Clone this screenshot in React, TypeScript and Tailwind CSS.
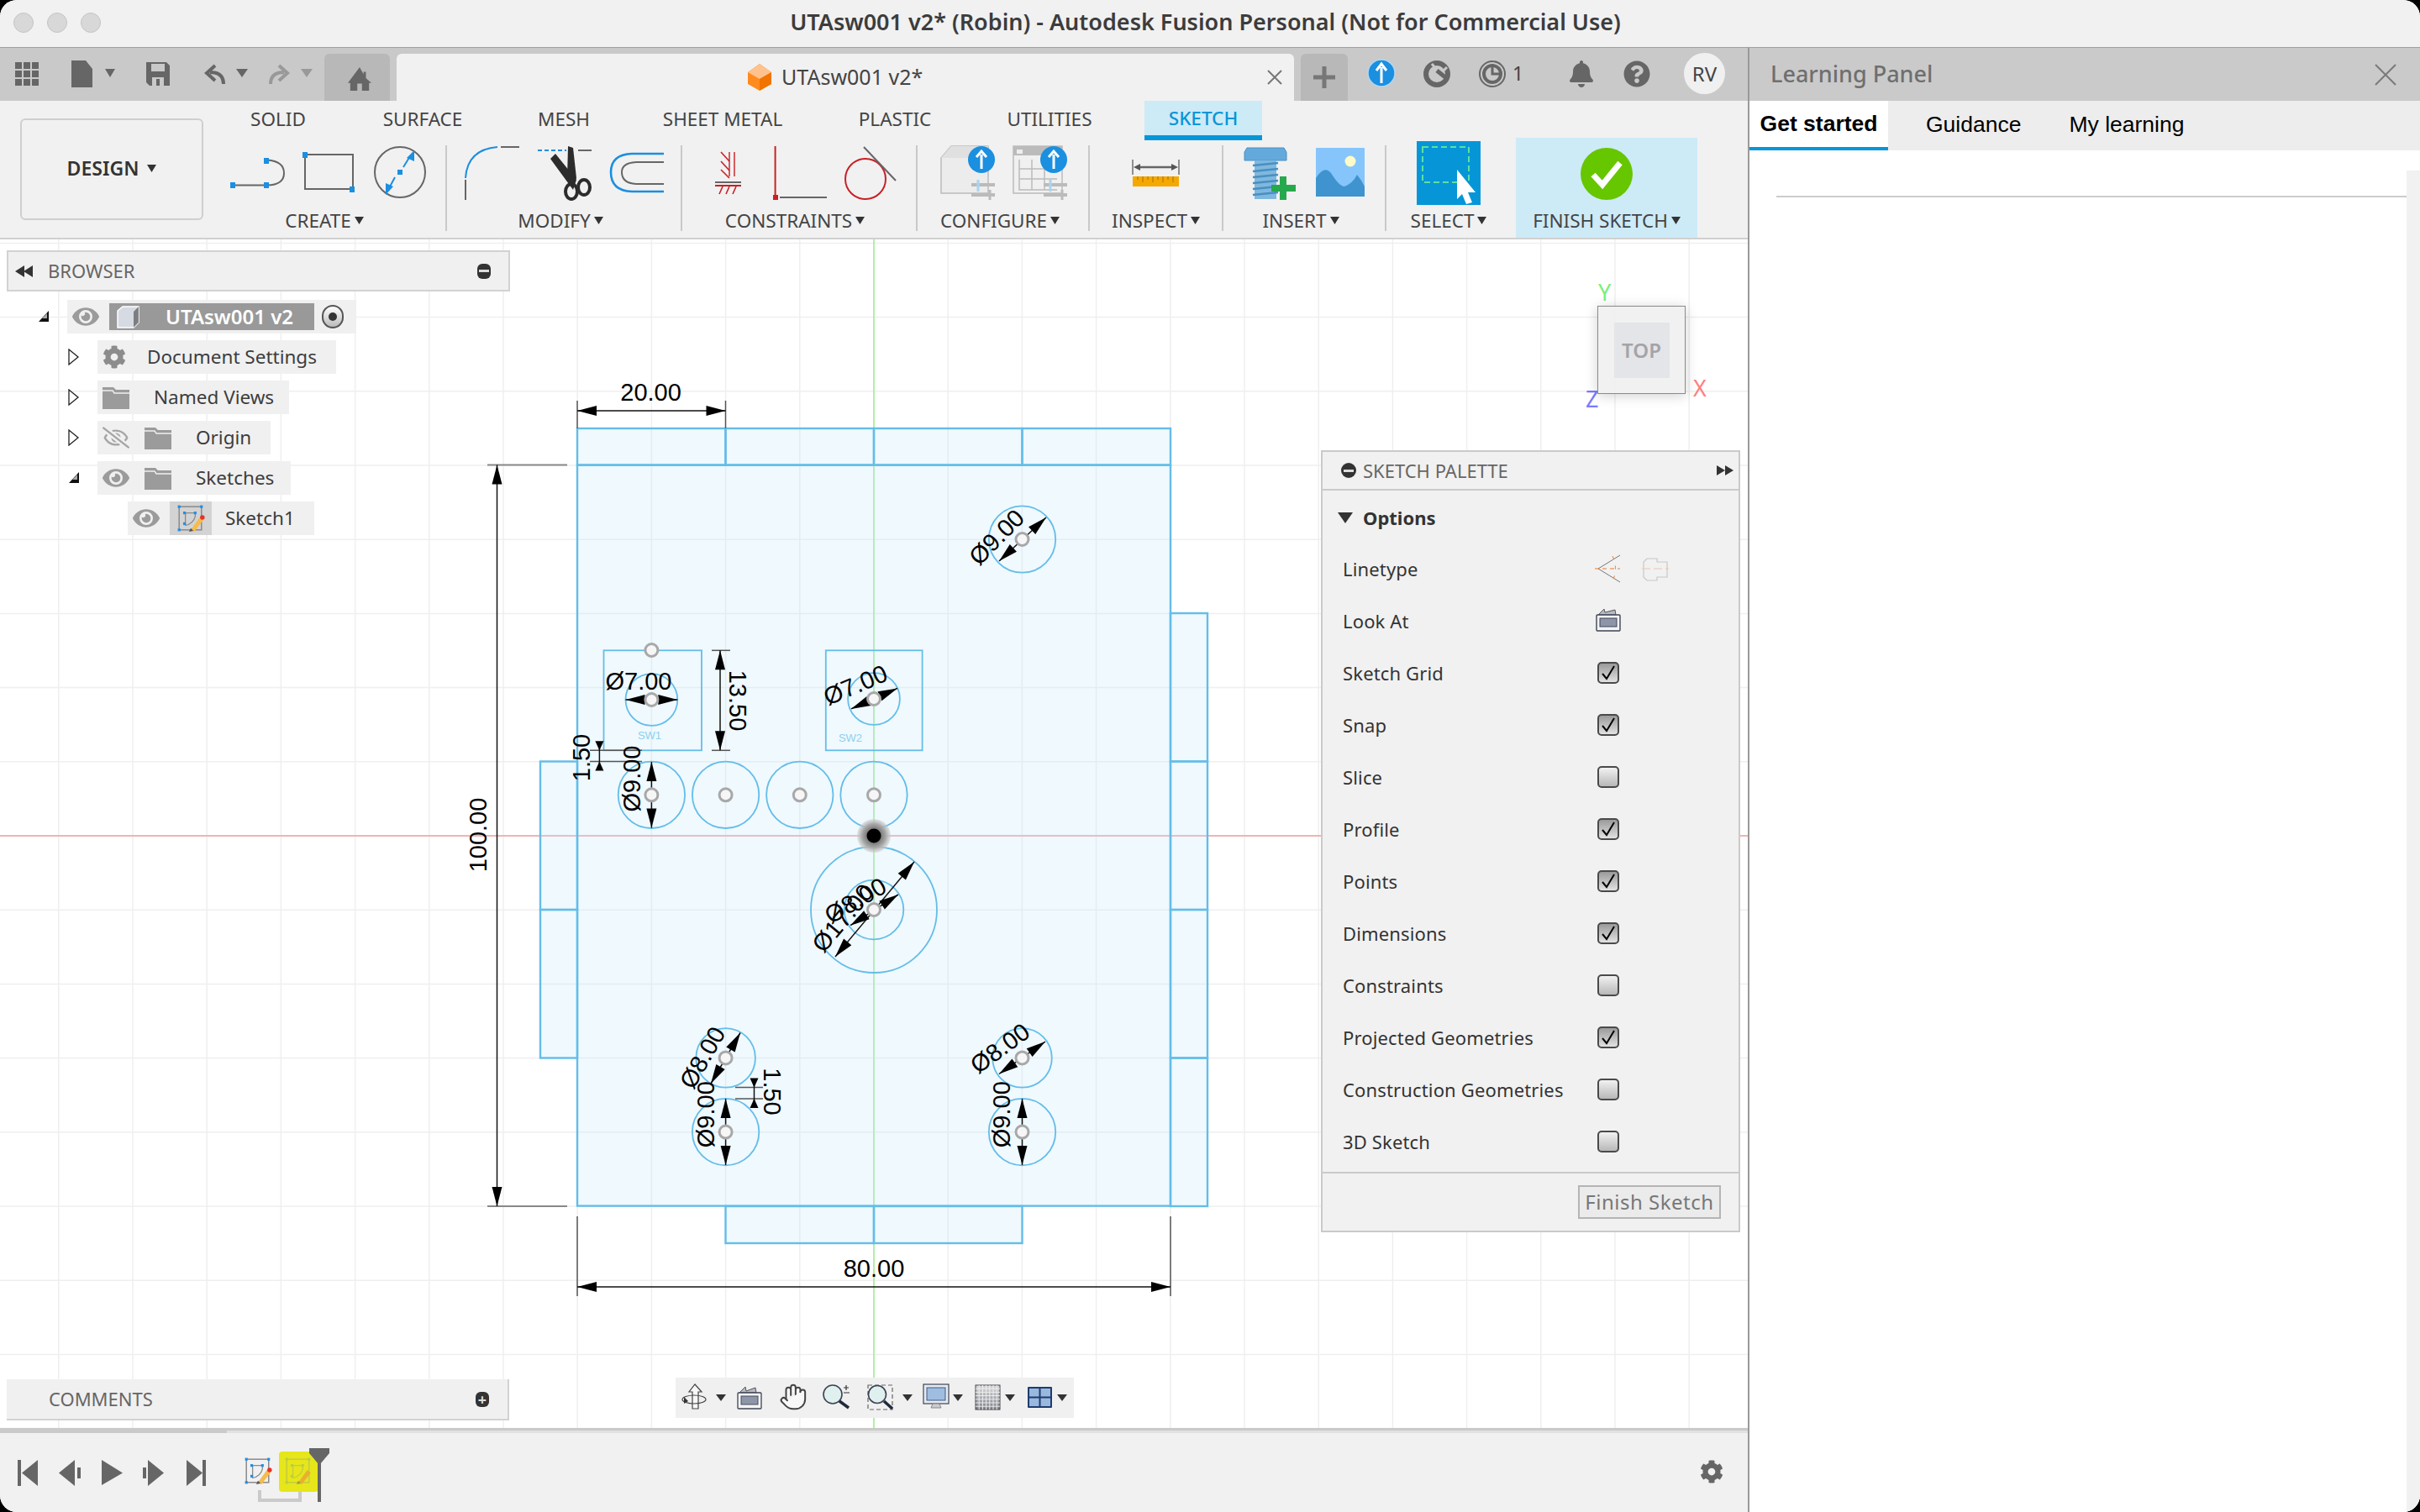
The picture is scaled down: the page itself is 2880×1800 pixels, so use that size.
import { FaBell, FaCog, FaEye, FaQuestionCircle, FaRegEyeSlash } from "react-icons/fa";
import { Hand } from "lucide-react";

const BLUE = "#0696d7";
const HANDLE = "#1b8fe0";
const LINE = "#64bde8";
const gridX = Array.from({ length: 25 }, (_, i) => 1040 + (i - 12) * 88.2);
const gridY = Array.from({ length: 18 }, (_, i) => 995 + (i - 8) * 88.2);

function Caret({ className = "" }: { className?: string }) {
  return (
    <svg width="11" height="9" viewBox="0 0 11 9" className={className}>
      <polygon points="0,0 11,0 5.5,9" fill="#333" />
    </svg>
  );
}

function SketchIcon({ faded = false, size = 34 }: { faded?: boolean; size?: number }) {
  const c = faded ? "#b8cf40" : "#1d8fe8";
  const g = faded ? "#c5cc3c" : "#8a8a8a";
  return (
    <svg width={size} height={size} viewBox="0 0 32 32">
      <rect x="3" y="3" width="25" height="26" fill="none" stroke={g} strokeWidth="1.4" />
      <path d="M9 10 H21 V14 Q19 22 10 24 V10" fill="none" stroke={g} strokeWidth="1.2" />
      {[[3, 3], [28, 3], [3, 29], [9, 10], [21, 10], [9, 22]].map(([x, y]) => (
        <rect key={`${x}-${y}`} x={x - 1.5} y={y - 1.5} width="3" height="3" fill={c} />
      ))}
      <polygon points="16,29 26,15 30,18 20,31" fill={faded ? "#e8b030" : "#f6bb4a"} />
      <polygon points="14,31 16,27 19,30" fill={faded ? "#9aa030" : "#555"} />
      {!faded && <circle cx="29" cy="15" r="2.6" fill="#e8302a" />}
    </svg>
  );
}

function Folder() {
  return (
    <svg width="32" height="27" viewBox="0 0 32 27">
      <path d="M0 1 H13 L16 4 H32 V27 H0 Z" fill="#9b9b9b" />
      <path d="M0 5 H12 L14 8 H32" fill="none" stroke="#f0f0f0" strokeWidth="1.4" />
    </svg>
  );
}

function Row({ indent, width, children }: { indent: string; width: string; children: React.ReactNode }) {
  return <div className={`relative flex h-10 items-center bg-[#f0f0f0] ${indent} ${width}`}>{children}</div>;
}

function TreeArrow({ open }: { open: boolean }) {
  return (
    <svg width="14" height="20" viewBox="0 0 14 20" className="absolute left-[-35px] top-[10px]">
      {open ? (
        <>
          <polygon points="13,3 13,16 1,16" fill="#111" />
          <polygon points="11,6 11,12 5,12" fill="#aaa" />
        </>
      ) : (
        <polygon points="1,1 12,10 1,19" fill="#fff" stroke="#222" strokeWidth="1.3" />
      )}
    </svg>
  );
}

function Browser() {
  const text = "font-['Noto_Sans',sans-serif] text-[22.5px] text-[#3d3d3d] whitespace-nowrap";
  return (
    <div className="absolute left-2 top-[13px] w-[599px]">
      <div className="flex h-[49px] items-center justify-between border-2 border-[#d2d2d2] bg-[#f0f0f0] pl-[8px] pr-[21px]">
        <div className="flex items-center gap-[17px]">
          <svg width="22" height="14" viewBox="0 0 22 14">
            <polygon points="0,7 11,0 11,14" fill="#333" />
            <polygon points="10,7 21,0 21,14" fill="#333" />
          </svg>
          <span className="font-['Noto_Sans',sans-serif] text-[22px] text-[#666]">BROWSER</span>
        </div>
        <div className="flex h-[18px] w-[16px] items-center justify-center rounded-[6px] bg-[#333]">
          <div className="h-[3px] w-[12px] bg-[#ddd]" />
        </div>
      </div>
      <div className="flex flex-col gap-2 pt-[10px]">
        <div className="relative ml-[72px] flex h-10 w-[344px] items-center bg-[#f0f0f0] pl-[6px]">
          <TreeArrow open />
          <FaEye size={32} color="#9b9b9b" />
          <div className="ml-[12px] flex h-8 w-[244px] items-center bg-[#999] pl-[9px]">
            <svg width="27" height="27" viewBox="0 0 27 27">
              <polygon points="1,6 7,1 26,1 26,20 20,26 1,26" fill="#d5dae3" stroke="#fff" strokeWidth="1.5" />
              <polygon points="20,7 26,1 26,20 20,26" fill="#333" opacity="0.55" />
            </svg>
            <span className="ml-[31px] font-['Noto_Sans',sans-serif] text-[24px] font-semibold text-white">UTAsw001 v2</span>
          </div>
          <div className="ml-[9px] flex h-[28px] w-[26px] items-center justify-center rounded-full border-2 border-[#555] bg-linear-to-b from-[#fff] to-[#bbb]">
            <div className="h-[10px] w-[10px] rounded-full bg-[#333]" />
          </div>
        </div>
        <Row indent="ml-[108px]" width="w-[284px]">
          <TreeArrow open={false} />
          <FaCog size={28} color="#8c8c8c" className="ml-[6px]" />
          <span className={`ml-[25px] ${text}`}>Document Settings</span>
        </Row>
        <Row indent="ml-[108px]" width="w-[228px]">
          <TreeArrow open={false} />
          <div className="ml-[6px]"><Folder /></div>
          <span className={`ml-[29px] ${text}`}>Named Views</span>
        </Row>
        <Row indent="ml-[108px]" width="w-[206px]">
          <TreeArrow open={false} />
          <FaRegEyeSlash size={32} color="#a5a5a5" className="ml-[6px]" />
          <div className="ml-[18px]"><Folder /></div>
          <span className={`ml-[29px] ${text}`}>Origin</span>
        </Row>
        <Row indent="ml-[108px]" width="w-[230px]">
          <TreeArrow open />
          <FaEye size={32} color="#9b9b9b" className="ml-[6px]" />
          <div className="ml-[18px]"><Folder /></div>
          <span className={`ml-[29px] ${text}`}>Sketches</span>
        </Row>
        <Row indent="ml-[144px]" width="w-[222px]">
          <FaEye size={32} color="#9b9b9b" className="ml-[6px]" />
          <div className="ml-[12px] flex h-10 w-[50px] items-center justify-center bg-[#d3d3d3]">
            <SketchIcon />
          </div>
          <span className={`ml-[16px] ${text}`}>Sketch1</span>
        </Row>
      </div>
    </div>
  );
}

function Check({ on }: { on: boolean }) {
  return (
    <div
      className={`flex h-[26px] w-[26px] items-center justify-center rounded-[5px] border-2 border-[#4a4a4a] bg-linear-to-b ${
        on ? "from-[#9a9a9a] to-[#e2e2e2]" : "from-[#f2f2f2] to-[#b8b8b8]"
      }`}
    >
      {on && (
        <svg width="20" height="20" viewBox="0 0 20 20">
          <path d="M3 11 L8 17 L17 2" fill="none" stroke="#000" strokeWidth="2" />
        </svg>
      )}
    </div>
  );
}

const paletteRows: [string, boolean][] = [
  ["Sketch Grid", true],
  ["Snap", true],
  ["Slice", false],
  ["Profile", true],
  ["Points", true],
  ["Dimensions", true],
  ["Constraints", false],
  ["Projected Geometries", true],
  ["Construction Geometries", false],
  ["3D Sketch", false],
];

function LookAt({ className = "" }: { className?: string }) {
  return (
    <svg width="30" height="28" viewBox="0 0 30 28" className={className}>
      <polygon points="3,8 10,1 11,5 23,2 24,8" fill="#b5bac4" stroke="#555" strokeWidth="1" />
      <rect x="1" y="8" width="28" height="19" rx="1" fill="#f4f4f4" stroke="#3c4456" strokeWidth="1.4" />
      <rect x="5" y="12" width="20" height="10" fill="#8d96a9" stroke="#3c4456" strokeWidth="1" />
    </svg>
  );
}

function SketchPalette() {
  const label = "font-['Noto_Sans',sans-serif] text-[22px] tracking-[0.15px] text-[#333] whitespace-nowrap";
  return (
    <div className="absolute left-[1572px] top-[251px] w-[499px] bg-[#f1f1f1]">
      <div className="flex h-[48px] items-center justify-between border-2 border-[#cacaca] pl-[22px] pr-[6px]">
        <div className="flex items-center gap-[8px]">
          <div className="flex h-[18px] w-[18px] items-center justify-center rounded-full bg-[#333]">
            <div className="h-[3px] w-[12px] bg-[#ddd]" />
          </div>
          <span className="font-['Noto_Sans',sans-serif] text-[22px] text-[#666]">SKETCH PALETTE</span>
        </div>
        <svg width="20" height="12" viewBox="0 0 20 12">
          <polygon points="0,0 10,6 0,12" fill="#333" />
          <polygon points="10,0 20,6 10,12" fill="#333" />
        </svg>
      </div>
      <div className="border-x-2 border-[#cacaca] pb-[5px]">
        <div className="flex h-[62px] items-center pl-[18px] pt-[2px]">
          <svg width="18" height="13" viewBox="0 0 18 13"><polygon points="0,0 18,0 9,13" fill="#333" /></svg>
          <span className="ml-[12px] font-['Noto_Sans',sans-serif] text-[22px] font-bold text-[#333]">Options</span>
        </div>
        <div className="flex h-[62px] items-center pl-[24px]">
          <span className={`w-[300px] ${label}`}>Linetype</span>
          <svg width="90" height="36" viewBox="0 0 90 36">
            <path d="M30 2 L4 18 L30 34" fill="none" stroke="#777" strokeWidth="1" />
            <path d="M0 18 H30" fill="none" stroke="#f07a2a" strokeWidth="1.2" strokeDasharray="5 4" />
            <path d="M21 3 Q28 18 21 33" fill="none" stroke="#f07a2a" strokeWidth="1" strokeDasharray="4 8" />
            <path d="M62 6 H74 V10 H86 V28 H74 V32 H62 L58 28 V10 Z" fill="none" stroke="#c8c8c8" strokeWidth="1.2" />
            <path d="M56 18 H88" stroke="#ecc6ae" strokeWidth="1" strokeDasharray="10 4" />
          </svg>
        </div>
        <div className="flex h-[62px] items-center pl-[24px]">
          <span className={`w-[301px] ${label}`}>Look At</span>
          <LookAt className="-translate-y-px" />
        </div>
        {paletteRows.map(([name, on]) => (
          <div key={name} className="flex h-[62px] items-center pl-[24px]">
            <span className={`w-[303px] ${label}`}>{name}</span>
            <Check on={on} />
          </div>
        ))}
      </div>
      <div className="flex h-[72px] items-center justify-end border-2 border-[#cacaca] pr-[21px]">
        <div className="flex h-[40px] w-[170px] items-center justify-center border-2 border-[#b5b5b5] bg-[#ebebeb] font-['Noto_Sans',sans-serif] text-[24px] tracking-[0.5px] text-[#777]">
          Finish Sketch
        </div>
      </div>
    </div>
  );
}

function ViewCube() {
  const axis = "absolute font-['Noto_Sans',sans-serif] text-[27px] leading-none";
  return (
    <>
      <span className={`${axis} left-[1902px] top-[49px] text-[#7af07a]`}>Y</span>
      <span className={`${axis} left-[2015px] top-[163px] text-[#ff8080]`}>X</span>
      <span className={`${axis} left-[1887px] top-[176px] text-[#7a7aff]`}>Z</span>
      <div className="absolute left-[1901px] top-[79px] flex h-[105px] w-[105px] items-center justify-center border border-[#8a8a8a] bg-[#f0f0f0]/90 shadow-[0_2px_14px_rgba(0,0,0,0.18)]">
        <div className="flex h-[66px] w-[66px] items-center justify-center bg-[#e4e5e8] font-['Noto_Sans',sans-serif] text-[24px] font-semibold text-[#a3a4a8]">
          TOP
        </div>
      </div>
    </>
  );
}

function Tip({ x, y, dx, dy, len = 23, w = 6 }: { x: number; y: number; dx: number; dy: number; len?: number; w?: number }) {
  const m = Math.hypot(dx, dy);
  const ux = dx / m;
  const uy = dy / m;
  const bx = x - ux * len;
  const by = y - uy * len;
  return <polygon points={`${x},${y} ${bx - uy * w},${by + ux * w} ${bx + uy * w},${by - ux * w}`} fill="#000" />;
}

function Dim({ x1, y1, x2, y2, len = 23, w = 6 }: { x1: number; y1: number; x2: number; y2: number; len?: number; w?: number }) {
  return (
    <g>
      <line x1={x1} y1={y1} x2={x2} y2={y2} stroke="#111" strokeWidth="1.5" />
      <Tip x={x1} y={y1} dx={x1 - x2} dy={y1 - y2} len={len} w={w} />
      <Tip x={x2} y={y2} dx={x2 - x1} dy={y2 - y1} len={len} w={w} />
    </g>
  );
}

function DimText({ x, y, r = 0, children }: { x: number; y: number; r?: number; children: string }) {
  return (
    <text
      x={x}
      y={y}
      textAnchor="middle"
      dominantBaseline="central"
      transform={`rotate(${r} ${x} ${y})`}
      className="font-['Liberation_Sans',sans-serif] text-[29px]"
      fill="#000"
    >
      {children}
    </text>
  );
}

function Pt({ x, y }: { x: number; y: number }) {
  return <circle cx={x} cy={y} r="7.5" fill="#f6f6f6" stroke="#a8a8a8" strokeWidth="3" />;
}

const circles: [number, number, number][] = [
  [1216.5, 642, 39.7],
  [775.4, 833, 30.9],
  [1040, 832, 30.9],
  [775.4, 946.3, 39.7],
  [863.6, 946.3, 39.7],
  [951.8, 946.3, 39.7],
  [1040, 946.3, 39.7],
  [1040, 1083, 75],
  [1040, 1083, 35.3],
  [863.6, 1259.4, 35.3],
  [863.6, 1347.6, 39.7],
  [1216.5, 1259.4, 35.3],
  [1216.5, 1347.6, 39.7],
];

function Drawing() {
  return (
    <svg width="2080" height="1415" viewBox="0 285 2080 1415" className="absolute inset-0">
      <defs>
        <radialGradient id="halo">
          <stop offset="0.4" stopColor="#777" />
          <stop offset="0.72" stopColor="#aaa" />
          <stop offset="1" stopColor="#ccc" stopOpacity="0.5" />
        </radialGradient>
      </defs>
      {gridX.map((x) => (
        <line key={x} x1={x} y1="285" x2={x} y2="1700" stroke="#efefef" strokeWidth="1.5" />
      ))}
      {gridY.map((y) => (
        <line key={y} x1="0" y1={y} x2="2080" y2={y} stroke="#efefef" strokeWidth="1.5" />
      ))}
      <line x1="1040" y1="285" x2="1040" y2="1700" stroke="#b4eeaa" strokeWidth="2" />
      <line x1="0" y1="995" x2="2080" y2="995" stroke="#f2b4b4" strokeWidth="2" />

      {/* body and flanges */}
      <g fill="rgba(190,228,250,0.24)" stroke={LINE} strokeWidth="2.4">
        <rect x="687" y="553.6" width="706" height="882" />
        <rect x="687" y="510" width="176.5" height="43.6" />
        <rect x="863.5" y="510" width="176.5" height="43.6" />
        <rect x="1040" y="510" width="176.5" height="43.6" />
        <rect x="1216.5" y="510" width="176.5" height="43.6" />
        <rect x="1393" y="730" width="44" height="176.5" />
        <rect x="1393" y="906.5" width="44" height="176.5" />
        <rect x="1393" y="1083" width="44" height="176.5" />
        <rect x="1393" y="1259.5" width="44" height="176.5" />
        <rect x="643" y="906.5" width="44" height="176.5" />
        <rect x="643" y="1083" width="44" height="176.5" />
        <rect x="863.5" y="1436" width="176.5" height="44" />
        <rect x="1040" y="1436" width="176.5" height="44" />
      </g>
      <g fill="none" stroke={LINE} strokeWidth="1.8">
        <rect x="718.5" y="774.3" width="116.5" height="119" />
        <rect x="982.8" y="774.3" width="114.8" height="119" />
        {circles.map(([x, y, r]) => (
          <circle key={`${x}-${y}-${r}`} cx={x} cy={y} r={r} />
        ))}
      </g>
      <text x="773" y="875" textAnchor="middle" dominantBaseline="central" fill="#8ed0f0" className="font-['Liberation_Sans',sans-serif] text-[13px]">SW1</text>
      <text x="1012" y="878" textAnchor="middle" dominantBaseline="central" fill="#8ed0f0" className="font-['Liberation_Sans',sans-serif] text-[13px]">SW2</text>

      {/* extension lines */}
      <g stroke="#555" strokeWidth="1.5">
        <line x1="687" y1="477" x2="687" y2="510" />
        <line x1="863.5" y1="477" x2="863.5" y2="510" />
        <line x1="687" y1="1448" x2="687" y2="1543" />
        <line x1="1393" y1="1448" x2="1393" y2="1543" />
        <line x1="847" y1="774.3" x2="869" y2="774.3" />
        <line x1="847" y1="893.3" x2="869" y2="893.3" />
        <line x1="702" y1="893.3" x2="764" y2="893.3" />
        <line x1="702" y1="906.4" x2="764" y2="906.4" />
        <line x1="875" y1="1294.6" x2="908" y2="1294.6" />
        <line x1="875" y1="1308" x2="908" y2="1308" />
      </g>
      <g stroke="#888" strokeWidth="2">
        <line x1="580" y1="553.6" x2="675" y2="553.6" />
        <line x1="580" y1="1436" x2="675" y2="1436" />
      </g>

      {/* dimensions */}
      <Dim x1={687} y1={489} x2={863.5} y2={489} />
      <DimText x={774.6} y={467}>20.00</DimText>
      <Dim x1={591.5} y1={553.6} x2={591.5} y2={1436} />
      <DimText x={569} y={994} r={-90}>100.00</DimText>
      <Dim x1={687} y1={1532} x2={1393} y2={1532} />
      <DimText x={1040} y={1510}>80.00</DimText>
      <Dim x1={857} y1={774.3} x2={857} y2={893.3} />
      <DimText x={878} y={834} r={90}>13.50</DimText>

      <line x1="713.4" y1="883" x2="713.4" y2="917" stroke="#111" strokeWidth="1.5" />
      <Tip x={713.4} y={893.3} dx={0} dy={1} len={11} w={5} />
      <Tip x={713.4} y={906.4} dx={0} dy={-1} len={11} w={5} />
      <DimText x={692} y={902} r={-90}>1.50</DimText>

      <line x1="897.5" y1="1285" x2="897.5" y2="1318" stroke="#111" strokeWidth="1.5" />
      <Tip x={897.5} y={1294.6} dx={0} dy={1} len={11} w={5} />
      <Tip x={897.5} y={1308} dx={0} dy={-1} len={11} w={5} />
      <DimText x={918.5} y={1299.5} r={90}>1.50</DimText>

      <Dim x1={1189} y1={668} x2={1245} y2={616} />
      <DimText x={1186} y={639.4} r={-45}>Ø9.00</DimText>
      <Dim x1={744.5} y1={833} x2={806.3} y2={833} />
      <DimText x={760} y={810.7}>Ø7.00</DimText>
      <Dim x1={1012.9} y1={843.9} x2={1068} y2={819.4} />
      <DimText x={1018} y={815.5} r={-23}>Ø7.00</DimText>
      <Dim x1={775.4} y1={907} x2={775.4} y2={985.6} />
      <DimText x={751.6} y={927} r={-90}>Ø9.00</DimText>
      <Dim x1={994} y1={1139} x2={1088} y2={1026} />
      <DimText x={1003} y={1093} r={-50}>Ø17.00</DimText>
      <Dim x1={1012} y1={1101.7} x2={1069} y2={1065} />
      <DimText x={1018} y={1072} r={-30}>Ø8.00</DimText>
      <Dim x1={846} y1={1290} x2={881} y2={1229.5} />
      <DimText x={836} y={1259} r={-60}>Ø8.00</DimText>
      <Dim x1={863.6} y1={1308} x2={863.6} y2={1387} />
      <DimText x={840.4} y={1326.7} r={-90}>Ø9.00</DimText>
      <Dim x1={1189} y1={1278.5} x2={1244} y2={1240} />
      <DimText x={1190} y={1248} r={-36}>Ø8.00</DimText>
      <Dim x1={1216.5} y1={1308} x2={1216.5} y2={1387} />
      <DimText x={1192.4} y={1326.7} r={-90}>Ø9.00</DimText>

      {/* sketch points */}
      {[
        [1216.5, 642], [775.4, 774], [775.4, 833], [1040, 832], [775.4, 946.3], [863.6, 946.3], [951.8, 946.3],
        [1040, 946.3], [1040, 1083], [863.6, 1259.4], [863.6, 1347.6], [1216.5, 1259.4], [1216.5, 1347.6],
      ].map(([x, y]) => (
        <Pt key={`${x}-${y}`} x={x} y={y} />
      ))}
      <circle cx="1040" cy="995" r="20" fill="url(#halo)" />
      <circle cx="1040" cy="995" r="8.5" fill="#000" />
    </svg>
  );
}

function NavBar() {
  const caret = (x: number) => <polygon points={`${x - 6},1660 ${x + 6},1660 ${x},1668`} fill="#333" />;
  return (
    <div className="absolute left-[804px] top-[1355px] h-[48px] w-[474px] bg-[#f0f0f0]">
      <svg width="474" height="48" viewBox="804 1640 474 48">
        <defs>
          <linearGradient id="gridFade" x1="0" y1="0" x2="0" y2="1">
            <stop offset="0" stopColor="#d8d9dc" />
            <stop offset="1" stopColor="#7f828a" />
          </linearGradient>
        </defs>
        <polygon points="827,1648 835,1657 831,1657 831,1677 824,1677 824,1657 820,1657" fill="#f8f8f8" stroke="#444" strokeWidth="1.2" />
        <ellipse cx="826" cy="1666" rx="14" ry="5" fill="none" stroke="#444" strokeWidth="1.2" />
        <polygon points="814,1663 819,1668 814,1671" fill="#333" />
        {caret(858)}
        <LookAtNav />
        <circle cx="991" cy="1660" r="11" fill="#dff0ee" stroke="#3c4456" strokeWidth="1.6" />
        <line x1="999" y1="1668" x2="1010" y2="1676" stroke="#1f2a3a" strokeWidth="3.5" />
        <path d="M1007 1649 V1655 M1004 1652 H1010 M1004 1658 H1011" stroke="#333" strokeWidth="1.2" />
        <rect x="1033" y="1649" width="29" height="29" fill="none" stroke="#666" strokeWidth="1.2" strokeDasharray="5 3" />
        <circle cx="1044" cy="1660" r="10.5" fill="#dff0ee" stroke="#3c4456" strokeWidth="1.6" />
        <line x1="1052" y1="1668" x2="1062" y2="1677" stroke="#1f2a3a" strokeWidth="3.5" />
        {caret(1080)}
        <rect x="1099" y="1648" width="30" height="23" fill="#e8eaee" stroke="#3c4456" strokeWidth="1.2" />
        <rect x="1103" y="1652" width="22" height="15" fill="#9fbde0" stroke="#3c5a8a" strokeWidth="1" />
        <polygon points="1110,1671 1118,1671 1120,1676 1108,1676" fill="#c8cbd0" stroke="#777" strokeWidth="0.8" />
        {caret(1140)}
        <rect x="1161" y="1649" width="29" height="29" fill="url(#gridFade)" stroke="#444" strokeWidth="1" />
        {[1, 2, 3, 4, 5, 6].map((i) => (
          <g key={i} stroke="#f2f2f2" strokeWidth="0.9">
            <line x1={1161 + i * 4.2} y1="1649" x2={1161 + i * 4.2} y2="1678" />
            <line x1="1161" y1={1649 + i * 4.2} x2="1190" y2={1649 + i * 4.2} />
          </g>
        ))}
        {caret(1202)}
        <rect x="1223" y="1651" width="29" height="25" rx="1" fill="#1f3c6e" />
        {[[1225, 1653], [1238.5, 1653], [1225, 1664.5], [1238.5, 1664.5]].map(([x, y]) => (
          <rect key={`${x}-${y}`} x={x} y={y} width="11.5" height="9.5" fill="#99b8de" />
        ))}
        {caret(1264)}
      </svg>
      <Hand size={34} strokeWidth={1.4} fill="#f8f8f8" color="#444" className="absolute left-[123px] top-[6px]" />
    </div>
  );
}

function LookAtNav() {
  return (
    <g>
      <polygon points="880,1658 887,1651 888,1656 899,1652 900,1658" fill="#b5bac4" stroke="#555" strokeWidth="1" />
      <rect x="878" y="1658" width="28" height="19" rx="1" fill="#f4f4f4" stroke="#3c4456" strokeWidth="1.3" />
      <rect x="882" y="1662" width="20" height="10" fill="#8d96a9" stroke="#3c4456" strokeWidth="0.9" />
    </g>
  );
}

function Comments() {
  return (
    <div className="absolute left-2 top-[1357px] flex h-[49px] w-[598px] items-center justify-between border-b-2 border-r-2 border-[#d2d2d2] bg-[#f0f0f0] pl-[50px] pr-[22px]">
      <span className="font-['Noto_Sans',sans-serif] text-[22px] text-[#666]">COMMENTS</span>
      <div className="flex h-[18px] w-[16px] items-center justify-center rounded-[6px] bg-[#333] text-[18px] font-bold leading-none text-[#ddd]">+</div>
    </div>
  );
}

function Timeline() {
  return (
    <div className="flex h-[100px] flex-col bg-[#f1f1f1]">
      <div className="flex h-[6px]">
        <div className="w-[270px] bg-[#cacaca]" />
        <div className="flex flex-1 flex-col">
          <div className="h-[3px] bg-[#cacaca]" />
          <div className="h-[3px] bg-[#e2e2e2]" />
        </div>
      </div>
      <div className="flex flex-1 items-start justify-between pr-[29px]">
        <svg width="420" height="94" viewBox="0 1706 420 94">
          <g fill="#666">
            <rect x="21" y="1738" width="4" height="31" />
            <polygon points="45,1738 45,1769 26,1753.5" />
            <polygon points="89,1738 89,1769 70,1753.5" />
            <rect x="92" y="1747" width="4" height="13" />
            <polygon points="121,1738 146,1753.5 121,1768" />
            <rect x="170" y="1747" width="4" height="13" />
            <polygon points="176,1738 195,1753.5 176,1769" />
            <polygon points="222,1738 241,1753.5 222,1769" />
            <rect x="241" y="1738" width="4" height="31" />
          </g>
          <path d="M309 1774 V1786 H357 V1776" fill="none" stroke="#cacaca" strokeWidth="4" />
          <rect x="332" y="1728" width="47" height="48" rx="4" fill="#e6e61b" />
          <foreignObject x="290" y="1734" width="36" height="36"><SketchIcon /></foreignObject>
          <foreignObject x="338" y="1734" width="36" height="36"><SketchIcon faded /></foreignObject>
          <polygon points="368,1724 392,1724 392,1730 381,1743 379,1743 368,1730" fill="#666" />
          <rect x="378" y="1740" width="4" height="48" fill="#666" />
        </svg>
        <FaCog size={28} color="#666" className="mt-[32px]" />
      </div>
    </div>
  );
}

function Group({ width, label, pr = "", icons, viewBox, w }: { width: string; label: string; pr?: string; icons: React.ReactNode; viewBox: string; w: number }) {
  return (
    <div className={`flex h-[116px] flex-col items-center ${width} ${pr}`}>
      <svg width={w} height="84" viewBox={viewBox} className="shrink-0">{icons}</svg>
      <div className="flex h-[24px] items-center gap-[4px] font-['Noto_Sans',sans-serif] text-[22.5px] text-[#444]">
        {label}
        <Caret className="-translate-y-[1px]" />
      </div>
    </div>
  );
}

const Sep = () => <div className="mt-[6px] h-[102px] w-[2px] shrink-0 bg-[#c9c9c9]" />;

function Ribbon() {
  const tabs: [string, string][] = [
    ["SOLID", "w-[158px]"],
    ["SURFACE", "w-[186px]"],
    ["MESH", "w-[150px]"],
    ["SHEET METAL", "w-[228px]"],
    ["PLASTIC", "w-[182px]"],
    ["UTILITIES", "w-[186px]"],
  ];
  return (
    <div className="flex h-[165px] border-b-2 border-[#d0d0d0] bg-[#f1f1f1]">
      <div className="w-[252px] shrink-0 pl-[24px] pt-[21px]">
        <div className="flex h-[121px] w-[218px] items-center justify-center gap-[10px] rounded-[6px] border-2 border-[#cfcfcf] pb-[3px] font-['Noto_Sans',sans-serif] text-[23px] font-semibold text-[#333]">
          DESIGN
          <Caret />
        </div>
      </div>
      <div className="flex flex-col">
        <div className="flex h-[47px]">
          {tabs.map(([t, w]) => (
            <div key={t} className={`flex items-center justify-center pb-[4px] font-['Noto_Sans',sans-serif] text-[22.5px] text-[#444] ${w}`}>
              {t}
            </div>
          ))}
          <div className="ml-[20px] flex h-[47px] w-[140px] items-center justify-center border-b-[6px] border-[#0696d7] bg-[#cdeaf7] font-['Noto_Sans',sans-serif] text-[22.5px] font-medium text-[#0696d7]">
            SKETCH
          </div>
        </div>
        <div className="flex h-[116px]">
          <Group width="w-[278px]" pr="pr-[10px]" label="CREATE" w={268} viewBox="252 167 268 84" icons={
            <>
              <path d="M279 220.6 H316 M318 190.5 Q338 192 338 206 Q338 220 318 220.6" fill="none" stroke="#666" strokeWidth="2" />
              <g fill={HANDLE}>
                <rect x="274" y="217" width="6" height="7" />
                <rect x="314" y="217" width="6" height="7" />
                <rect x="314" y="188" width="6" height="7" />
              </g>
              <rect x="363" y="184" width="57" height="41" fill="none" stroke="#666" strokeWidth="2" />
              <rect x="360" y="181" width="6" height="7" fill={HANDLE} />
              <rect x="416" y="222" width="6" height="7" fill={HANDLE} />
              <circle cx="476" cy="205" r="30" fill="none" stroke="#666" strokeWidth="2" />
              <path d="M463 224 L470 211 M480 199 L488 186" stroke={HANDLE} strokeWidth="2" />
              <rect x="473" y="202" width="6" height="6" fill={HANDLE} />
              <polygon points="459,232 459,218 468,222" fill={HANDLE} />
              <polygon points="493,179 484,188 493,192" fill={HANDLE} />
            </>
          } />
          <Sep />
          <Group width="w-[278px]" pr="pr-[8px]" label="MODIFY" w={270} viewBox="532 167 270 84" icons={
            <>
              <path d="M554 212 Q556 178 592 175" fill="none" stroke={HANDLE} strokeWidth="2" />
              <path d="M596 175 H618 M554 214 V238" fill="none" stroke="#666" strokeWidth="2" />
              <path d="M640 179 H674" stroke={HANDLE} strokeWidth="2" strokeDasharray="5 3" />
              <path d="M688 179 H704" stroke="#666" strokeWidth="2" />
              <polygon points="676,174 682,176 686,212 681,224 675,212" fill="#2c2c2c" />
              <polygon points="655,189 661,183 686,214 682,226" fill="#2c2c2c" />
              <ellipse cx="680" cy="228" rx="7" ry="9" fill="none" stroke="#2c2c2c" strokeWidth="4" />
              <ellipse cx="695" cy="223" rx="7" ry="9" fill="none" stroke="#2c2c2c" strokeWidth="4" />
              <path d="M790 183 H752 Q727 184 727 205 Q727 227 752 228 H790" fill="none" stroke={HANDLE} strokeWidth="2.6" />
              <path d="M790 193 H757 Q740 194 740 205 Q740 218 757 219 H790" fill="none" stroke="#666" strokeWidth="2" />
            </>
          } />
          <Sep />
          <Group width="w-[278px]" pr="pr-[10px]" label="CONSTRAINTS" w={268} viewBox="812 167 268 84" icons={
            <>
              <path d="M868 181 V210 M874 181 V210" stroke="#c82026" strokeWidth="1.4" />
              <path d="M858 181 L868 192 M858 192 L868 203 M858 202 L868 212" stroke="#c82026" strokeWidth="1.6" />
              <path d="M851 217 H882" stroke="#666" strokeWidth="2" />
              <path d="M851 221 H882" stroke="#c82026" strokeWidth="2" />
              <path d="M856 231 L860 222 M864 231 L868 222 M872 231 L876 222" stroke="#c82026" strokeWidth="1.6" />
              <path d="M922.6 174 V232" stroke="#c82026" strokeWidth="2" />
              <rect x="920" y="232" width="6" height="6" fill="#c82026" />
              <path d="M928 235 H984" stroke="#666" strokeWidth="2" />
              <circle cx="1030" cy="213" r="24" fill="none" stroke="#c82026" strokeWidth="2" />
              <path d="M1028 175 L1066 215" stroke="#666" strokeWidth="2" />
            </>
          } />
          <Sep />
          <Group width="w-[203px]" pr="pr-[7px]" label="CONFIGURE" w={196} viewBox="1092 167 196 84" icons={
            <>
              <polygon points="1120,188 1132,174 1176,174 1176,230 1120,230" fill="#ececec" stroke="#bbb" strokeWidth="1.5" />
              <polygon points="1120,188 1132,174 1176,174 1172,188" fill="#e0e0e0" />
              <circle cx="1168" cy="190" r="16" fill={HANDLE} />
              <path d="M1168 201 V184 M1162 187 L1168 180 L1174 187" fill="none" stroke="#fff" strokeWidth="3" />
              <path d="M1156 220 H1184 M1156 232 H1184" stroke="#bbb" strokeWidth="4" />
              <path d="M1164 214 V228" stroke="#a8d4f0" strokeWidth="3" />
              <path d="M1178 226 V238" stroke="#bbb" strokeWidth="3" />
              <rect x="1206" y="174" width="58" height="56" fill="#f0f0f0" stroke="#bbb" strokeWidth="1.5" />
              <rect x="1206" y="174" width="58" height="11" fill="#bbb" />
              <rect x="1210" y="178" width="7" height="5" fill="#eee" />
              <path d="M1213 190 V226 H1258 M1213 201 H1258 M1213 213 H1258 M1228 190 V226 M1243 190 V226" fill="none" stroke="#bbb" strokeWidth="1.5" />
              <circle cx="1254" cy="190" r="16" fill={HANDLE} />
              <path d="M1254 201 V184 M1248 187 L1254 180 L1260 187" fill="none" stroke="#fff" strokeWidth="3" />
              <path d="M1242 220 H1270 M1242 232 H1270" stroke="#bbb" strokeWidth="4" />
              <path d="M1250 214 V228" stroke="#a8d4f0" strokeWidth="3" />
              <path d="M1264 226 V238" stroke="#bbb" strokeWidth="3" />
            </>
          } />
          <Sep />
          <Group width="w-[157px]" label="INSPECT" w={157} viewBox="1297 167 157 84" icons={
            <>
              <path d="M1348 190 V208 M1403 190 V208" stroke="#666" strokeWidth="1.4" />
              <path d="M1354 199 H1397" stroke="#666" strokeWidth="2.5" />
              <polygon points="1349,199 1357,195 1357,203" fill="#555" />
              <polygon points="1402,199 1394,195 1394,203" fill="#555" />
              <rect x="1348" y="210" width="55" height="12" fill="#f5a800" />
              {[1354, 1360, 1366, 1372, 1378, 1384, 1390, 1396].map((x, i) => (
                <line key={x} x1={x} y1="210" x2={x} y2={i % 2 ? 217 : 214} stroke="#a87000" strokeWidth="1" />
              ))}
            </>
          } />
          <Sep />
          <Group width="w-[192px]" pr="pr-[8px]" label="INSERT" w={184} viewBox="1456 167 184 84" icons={
            <>
              <polygon points="1484,176 1528,176 1531,181 1531,191 1481,191 1481,181" fill="#64a9dc" stroke="#4a90c4" strokeWidth="1" />
              <rect x="1493" y="191" width="26" height="46" fill="#7fb8df" />
              {[197, 204, 211, 218, 225, 232].map((y) => (
                <line key={y} x1="1491" y1={y} x2="1521" y2={y - 3} stroke="#4a8fc0" strokeWidth="2.4" />
              ))}
              <path d="M1527 210 V238 M1513 224 H1542" stroke="#25a94c" strokeWidth="8" />
              <rect x="1566" y="176" width="58" height="58" fill="#85c5fb" />
              <path d="M1566 234 V212 Q1576 196 1584 206 Q1594 222 1600 222 Q1610 218 1615 208 Q1620 214 1624 222 V234 Z" fill="#3f94cf" />
              <circle cx="1607" cy="192" r="6.5" fill="#fdfbc8" />
            </>
          } />
          <Sep />
          <Group width="w-[154px]" pr="pr-[6px]" label="SELECT" w={148} viewBox="1650 167 148 84" icons={
            <>
              <rect x="1686" y="168" width="76" height="76" fill={BLUE} />
              <rect x="1693" y="175" width="55" height="42" fill="none" stroke="#5ce0a0" strokeWidth="2" strokeDasharray="7 4" />
              <polygon points="1734,202 1756,229 1747,229 1752,241 1745,243 1740,231 1734,237" fill="#fff" />
            </>
          } />
          <div className="-mt-[3px] flex h-[119px] w-[216px] flex-col items-center bg-[#cdeaf7] pt-[11px]">
            <svg width="64" height="64" viewBox="0 0 64 64" className="shrink-0">
              <circle cx="32" cy="32" r="31" fill="#66c600" />
              <path d="M16 33 L27 45 L48 19" fill="none" stroke="#fff" strokeWidth="7" />
            </svg>
            <div className="mt-[12px] flex h-[24px] items-center gap-[4px] font-['Noto_Sans',sans-serif] text-[22.5px] text-[#444]">
              FINISH SKETCH
              <Caret className="-translate-y-[1px]" />
            </div>
          </div>
        </div>
      </div>
    </div>
  );
}

function TabBar() {
  return (
    <div className="flex h-[63px] shrink-0 bg-[#c9c9c9]">
      <svg width="386" height="63" viewBox="0 57 386 63" className="shrink-0">
        <g fill="#666">
          {[18, 28, 38].flatMap((x) =>
            [74, 84, 94].map((y) => <rect key={`${x}-${y}`} x={x} y={y} width="8" height="8" />),
          )}
          <path d="M85 72 H102 L110 82 V104 H85 Z" />
          <polygon points="125,82 137,82 131,92" />
          <path d="M174 74 H198 L202 78 V102 H178 L174 98 Z" />
          <polygon points="281,82 295,82 288,92" />
        </g>
        <rect x="180" y="76" width="16" height="9" fill="#c9c9c9" />
        <rect x="181" y="92" width="14" height="10" fill="#c9c9c9" />
        <rect x="186" y="94" width="4" height="8" fill="#666" />
        <path d="M266 100 Q266 86 250 86 M256 78 L246 87 L256 96" fill="none" stroke="#666" strokeWidth="4" />
        <path d="M322 100 Q322 86 338 86 M332 78 L342 87 L332 96" fill="none" stroke="#999" strokeWidth="4" />
        <polygon points="358,82 372,82 365,92" fill="#999" />
      </svg>
      <div className="mt-[7px] flex w-[78px] items-center justify-center rounded-t-[6px] bg-[#b8b8b8] pl-[6px] pt-[4px]">
        <svg width="30" height="28" viewBox="0 0 30 30">
          <path d="M15 0 L20 9 V6 H23 V14 L30 20 H27 V30 H18 V21 H12 V30 H3 V20 H0 Z" fill="#666" />
        </svg>
      </div>
      <div className="ml-2 mt-[7px] flex w-[1068px] items-center rounded-t-[6px] bg-[#f1f1f1] pl-[418px]">
        <svg width="28" height="32" viewBox="0 0 28 32">
          <polygon points="14,0 28,10 28,24 14,32 0,24 0,10" fill="#ff8a1e" />
          <polygon points="14,0 28,10 14,18 0,10" fill="#ffc28c" />
          <polygon points="14,18 28,10 28,24 14,32" fill="#f07400" />
        </svg>
        <span className="ml-[12px] font-['Noto_Sans',sans-serif] text-[25px] text-[#444]">UTAsw001 v2*</span>
        <svg width="18" height="18" viewBox="0 0 18 18" className="ml-auto mr-[14px]">
          <path d="M1 1 L17 17 M17 1 L1 17" stroke="#777" strokeWidth="2" />
        </svg>
      </div>
      <div className="ml-2 mt-[7px] flex w-[56px] items-center justify-center rounded-t-[6px] bg-[#b8b8b8]">
        <svg width="26" height="26" viewBox="0 0 26 26">
          <path d="M13 0 V26 M0 13 H26" stroke="#777" strokeWidth="5" />
        </svg>
      </div>
      <svg width="476" height="63" viewBox="1604 57 476 63" className="shrink-0">
        <circle cx="1644" cy="87" r="16" fill={HANDLE} stroke="#b0d8f2" strokeWidth="1.5" />
        <path d="M1644 99 V80 M1638 84 L1644 76 L1650 84" fill="none" stroke="#fff" strokeWidth="3" />
        <circle cx="1710" cy="88" r="13" fill="none" stroke="#666" strokeWidth="6" />
        <path d="M1704 76 L1714 88 L1722 80" fill="none" stroke="#c9c9c9" strokeWidth="3" />
        <path d="M1710 84 L1720 92" stroke="#666" strokeWidth="5" />
        <circle cx="1776" cy="88" r="15" fill="none" stroke="#666" strokeWidth="2" />
        <circle cx="1776" cy="88" r="10" fill="none" stroke="#666" strokeWidth="4" />
        <path d="M1776 80 V88 H1784" fill="none" stroke="#666" strokeWidth="3" />
        <text x="1800" y="96" fill="#444" className="font-['Noto_Sans',sans-serif] text-[23px]">1</text>
      </svg>
    </div>
  );
}

export default function App() {
  return (
    <div className="relative h-[1800px] w-[2880px] overflow-hidden bg-black">
      <div className="flex h-full flex-col overflow-hidden rounded-[20px] bg-white">
        <div className="relative flex h-[57px] shrink-0 items-center justify-center border-b border-[#9f9f9f] bg-[#f1f1f1] pb-[3px] pr-[11px]">
          <div className="absolute left-4 flex gap-[16px]">
            <div className="h-6 w-6 rounded-full border border-[#c4c4c4] bg-[#d8d8d8]" />
            <div className="h-6 w-6 rounded-full border border-[#c4c4c4] bg-[#d8d8d8]" />
            <div className="h-6 w-6 rounded-full border border-[#c4c4c4] bg-[#d8d8d8]" />
          </div>
          <span className="font-['Noto_Sans',sans-serif] text-[27px] font-semibold text-[#3c3c3c]">
            UTAsw001 v2* (Robin) - Autodesk Fusion Personal (Not for Commercial Use)
          </span>
        </div>
        <div className="flex min-h-0 flex-1">
          <div className="relative flex w-[2080px] shrink-0 flex-col">
            <TabBar />
            <Ribbon />
            <div className="relative h-[1415px] shrink-0 overflow-hidden bg-white">
              <Drawing />
              <Browser />
              <ViewCube />
              <SketchPalette />
              <NavBar />
              <Comments />
            </div>
            <Timeline />
            <div className="absolute left-[1866px] top-[6px] flex h-[49px] items-center text-[#666]">
              <FaBell size={32} />
              <FaQuestionCircle size={32} className="ml-[34px]" />
              <div className="ml-[40px] flex h-[49px] w-[49px] items-center justify-center rounded-full bg-[#f0f0f0] font-['Noto_Sans',sans-serif] text-[24px] text-[#444]">RV</div>
            </div>
          </div>
          <div className="flex min-w-0 flex-1 flex-col border-l-2 border-[#999] bg-white">
            <div className="flex h-[63px] shrink-0 items-center justify-between bg-[#cacaca] pl-[25px] pr-[28px]">
              <span className="font-['Noto_Sans',sans-serif] text-[27px] font-medium text-[#6f6f6f]">Learning Panel</span>
              <svg width="26" height="26" viewBox="0 0 26 26">
                <path d="M1 1 L25 25 M25 1 L1 25" stroke="#7a7a7a" strokeWidth="2" />
              </svg>
            </div>
            <div className="flex h-[59px] shrink-0 bg-[#ededed] font-['Liberation_Sans',sans-serif] text-[26.5px] text-black">
              <div className="flex w-[165px] items-center justify-center border-b-4 border-[#0696d7] bg-white font-bold">Get started</div>
              <span className="ml-[45px] self-center pb-[2px]">Guidance</span>
              <span className="ml-[57px] self-center pb-[2px]">My learning</span>
            </div>
            <div className="flex min-h-0 flex-1">
              <div className="ml-[32px] mt-[54px] h-[2px] flex-1 bg-[#cccccc]" />
              <div className="mt-[24px] w-[16px] bg-[#f1f1f1]" />
            </div>
          </div>
        </div>
      </div>
    </div>
  );
}
